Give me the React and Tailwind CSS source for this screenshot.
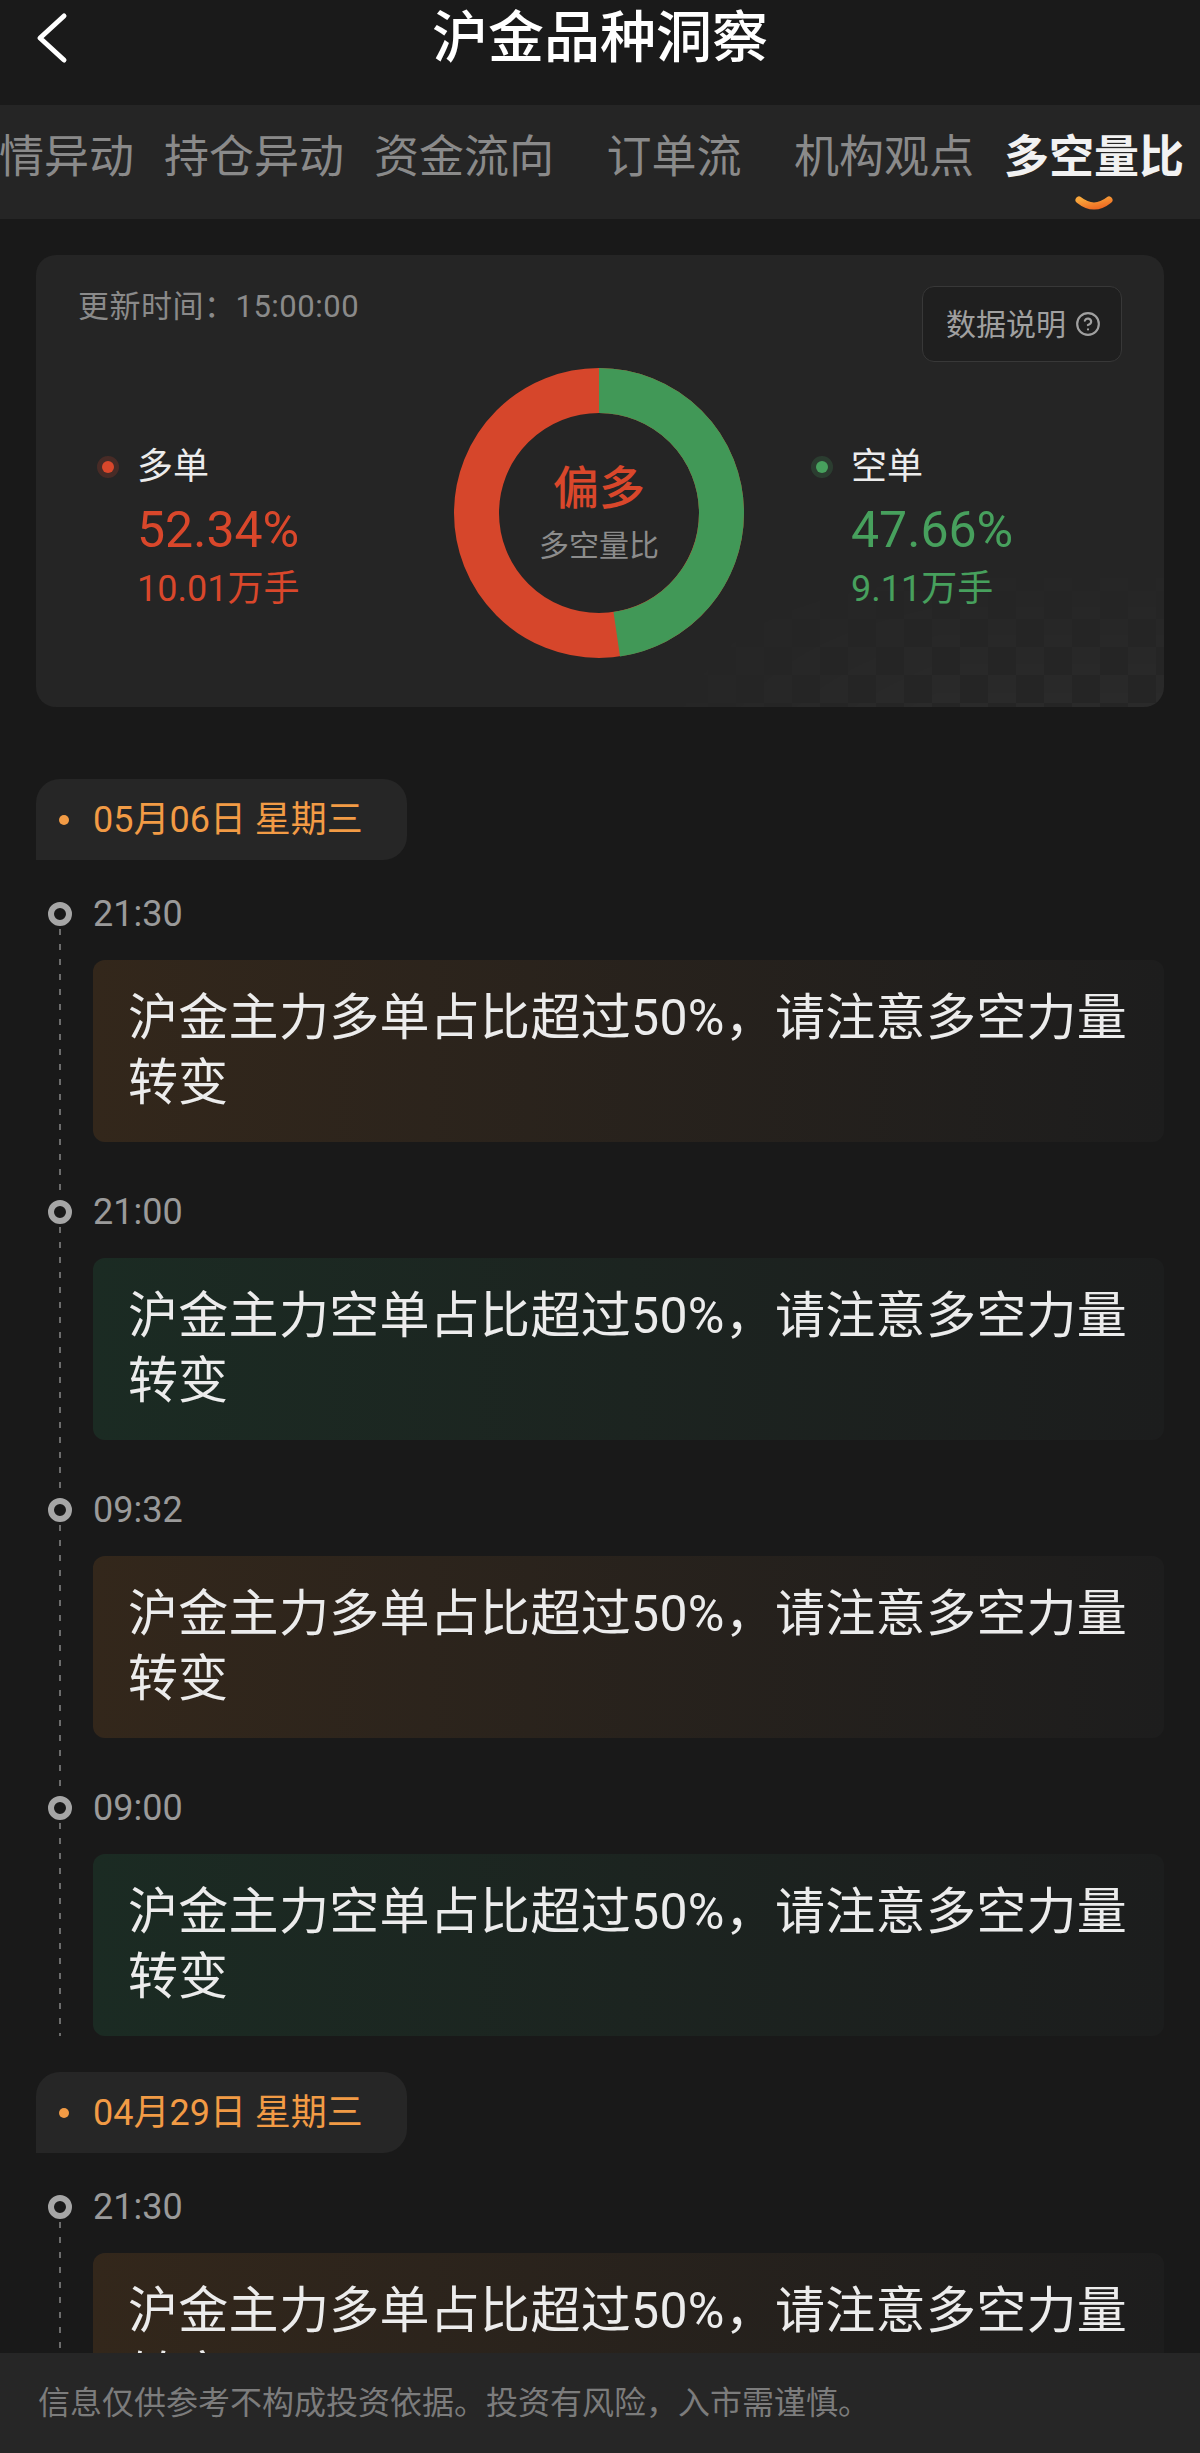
import { CircleHelp } from 'lucide-react'

const TABS = ['行情异动', '持仓异动', '资金流向', '订单流', '机构观点', '多空量比']

const GROUPS = [
  {
    date: '05月06日 星期三',
    items: [
      { time: '21:30', side: 'long' },
      { time: '21:00', side: 'short' },
      { time: '09:32', side: 'long' },
      { time: '09:00', side: 'short' },
    ],
  },
  {
    date: '04月29日 星期三',
    items: [{ time: '21:30', side: 'long' }],
  },
]

const LONG_PCT = 52.34
const R = 122.5
const C = 2 * Math.PI * R

function Donut() {
  const green = ((100 - LONG_PCT) / 100) * C
  return (
    <div className="relative w-[290px] h-[290px] mt-[6px] flex-shrink-0">
      <svg width="290" height="290" viewBox="0 0 290 290">
        <circle cx="145" cy="145" r={R} fill="none" stroke="#d6462b" strokeWidth="45" />
        <circle
          cx="145" cy="145" r={R} fill="none" stroke="#419857" strokeWidth="45"
          strokeDasharray={`${green} ${C}`}
          transform="rotate(-90 145 145)"
        />
      </svg>
      {/* 中间文字 */}
      <div className="absolute inset-0 flex flex-col items-center justify-center">
        <span className="text-[46px] leading-[56px] font-medium text-[#d9472b]">偏多</span>
        <span className="text-[30px] leading-[40px] mt-[10px] text-[#8c8c8c]">多空量比</span>
      </div>
    </div>
  )
}

function SideStat({ label, pct, lots, color, dot }) {
  return (
    <div className="flex flex-col mt-[82px]">
      <div className="flex items-center">
        <span className={`w-[12px] h-[12px] rounded-full ${dot}`} />
        <span className="ml-[23px] text-[36px] leading-[46px] text-[#ececec]">{label}</span>
      </div>
      <span className={`ml-[35px] mt-[10px] text-[50px] leading-[60px] ${color}`}>{pct}</span>
      <span className={`ml-[35px] mt-[6px] text-[36px] leading-[46px] ${color}`}>{lots}</span>
    </div>
  )
}

function Summary() {
  return (
    <div className="relative bg-[#252525] rounded-[20px] overflow-hidden">
      {/* 底部格纹装饰 */}
      <div className="absolute inset-0 bg-[conic-gradient(#ffffff06_25%,transparent_0_50%,#ffffff06_0_75%,transparent_0)] bg-[length:56px_56px] [mask-image:linear-gradient(to_bottom,transparent_62%,black),linear-gradient(to_right,transparent_50%,black_80%)] [mask-composite:intersect]" />
      <div className="relative flex items-start justify-between pt-[31px] px-[42px]">
        <span className="text-[31px] leading-[42px] text-[#8a8a8a] tracking-[0.5px]">更新时间：15:00:00</span>
        <div className="h-[76px] flex items-center pl-[23px] pr-[20px] gap-[9px] rounded-[12px] border border-[#383838] bg-[#1f1f1f]">
          <span className="text-[30px] text-[#a0a0a0]">数据说明</span>
          <CircleHelp className="w-[26px] h-[26px] text-[#a0a0a0]" strokeWidth={2} />
        </div>
      </div>
      <div className="relative flex items-start pl-[66px] pb-[49px]">
        <div className="w-[352px]">
          <SideStat label="多单" pct="52.34%" lots="10.01万手" color="text-[#d9472b]" dot="bg-[#d9472b] ring-[5px] ring-[#d9472b]/20" />
        </div>
        <Donut />
        <div className="ml-[72px]">
          <SideStat label="空单" pct="47.66%" lots="9.11万手" color="text-[#47a05d]" dot="bg-[#47a05d] ring-[5px] ring-[#47a05d]/20" />
        </div>
      </div>
    </div>
  )
}

function TimelineItem({ time, side, last }) {
  const long = side === 'long'
  const msg = long ? '沪金主力多单占比超过50%，请注意多空力量' : '沪金主力空单占比超过50%，请注意多空力量'
  return (
    <div className={`flex ${last ? '' : 'pb-[48px]'}`}>
      {/* 时间轴 */}
      <div className={`w-[57px] flex flex-col items-start flex-shrink-0 ${last ? '' : '-mb-[48px]'}`}>
        <div className="mt-[10px] ml-[12px] w-[24px] h-[24px] rounded-full border-[6px] border-[#a6a6a6] bg-[#191919]" />
        <div className="mt-[3px] ml-[23px] w-[2px] flex-1 bg-[linear-gradient(to_bottom,#6c6c6c_6px,transparent_6px)] bg-[length:2px_15px]" />
      </div>
      <div className="flex-1">
        <p className="text-[36px] leading-[44px] text-[#9a9a9a]">{time}</p>
        <div className={`mt-[24px] rounded-[12px] pl-[35px] pr-[20px] py-[26px] bg-gradient-to-r ${
          long ? 'from-[#33271b] to-[#1d1d1d]' : 'from-[#1b2b23] to-[#1c1d1d]'
        }`}>
          <p className="text-[50px] leading-[65px] text-[#ececec] whitespace-nowrap tracking-[0.3px]">{msg}</p>
          <p className="text-[50px] leading-[65px] text-[#ececec]">转变</p>
        </div>
      </div>
    </div>
  )
}

function DateGroup({ date, items, first }) {
  return (
    <div className={first ? 'mt-[72px]' : 'mt-[36px]'}>
      <div className="inline-flex items-center h-[81px] pl-[23px] pr-[44px] bg-[#262626] rounded-[24px] rounded-bl-none">
        <span className="w-[10px] h-[10px] rounded-full bg-[#f29b45]" />
        <span className="ml-[24px] text-[36px] text-[#f29b45]">{date}</span>
      </div>
      <div className="mt-[32px]">
        {items.map((it, i) => (
          <TimelineItem key={i} {...it} last={i === items.length - 1} />
        ))}
      </div>
    </div>
  )
}

export default function App() {
  return (
    <div className="w-[1200px] h-[2453px] flex flex-col overflow-hidden bg-[#191919] font-['Roboto','Noto_Sans_CJK_SC',sans-serif]">
      {/* 顶部标题 */}
      <div className="h-[105px] flex-shrink-0 bg-[#1a1a1a]">
        <div className="h-[76px] grid grid-cols-[1fr_auto_1fr] items-center">
          <div className="pl-[36px] flex items-center">
            <svg width="32" height="52" viewBox="0 0 32 52" fill="none">
              <polyline points="28,4 4,26 28,48" stroke="#ffffff" strokeWidth="5" strokeLinecap="round" strokeLinejoin="round" />
            </svg>
          </div>
          <h1 className="text-[56px] font-medium text-white leading-[76px]">沪金品种洞察</h1>
          <div />
        </div>
      </div>

      {/* 标签栏 */}
      <div className="h-[114px] flex-shrink-0 bg-[#252525] overflow-hidden pt-[30px]">
        <div className="flex ml-[-61px]">
          {TABS.map(t => {
            const active = t === '多空量比'
            return (
              <div key={t} className="w-[210px] flex-shrink-0 flex flex-col items-center">
                <span className={`text-[45px] leading-[46px] whitespace-nowrap ${active ? 'font-bold text-[#f2f2f2]' : 'text-[#8a8a8a]'}`}>{t}</span>
                {active && (
                  <svg className="mt-[14px]" width="40" height="18" viewBox="0 0 40 18" fill="none">
                    <defs>
                      <linearGradient id="ind" x1="0" y1="0" x2="1" y2="1">
                        <stop offset="0" stopColor="#f8a63c" />
                        <stop offset="1" stopColor="#ee6a22" />
                      </linearGradient>
                    </defs>
                    <path d="M5 5 Q20 17 35 5" stroke="url(#ind)" strokeWidth="7" strokeLinecap="round" />
                  </svg>
                )}
              </div>
            )
          })}
        </div>
      </div>

      {/* 内容 */}
      <div className="flex-1 overflow-hidden px-[36px] pt-[36px]">
        <Summary />
        {GROUPS.map((g, i) => (
          <DateGroup key={g.date} {...g} first={i === 0} />
        ))}
      </div>

      {/* 底部提示 */}
      <div className="h-[100px] flex-shrink-0 bg-[#262626] flex items-center px-[38px]">
        <span className="text-[32px] text-[#7c7c7c]">信息仅供参考不构成投资依据。投资有风险，入市需谨慎。</span>
      </div>
    </div>
  )
}
